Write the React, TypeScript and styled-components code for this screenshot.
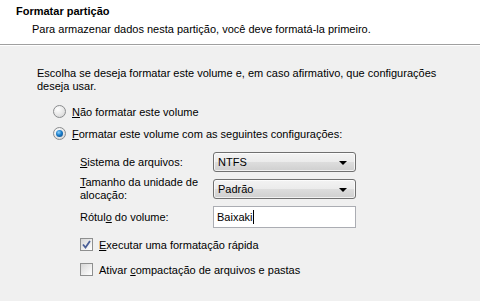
import React from 'react';
import styled, { createGlobalStyle } from 'styled-components';

const GlobalStyle = createGlobalStyle`
  html, body {
    margin: 0;
    padding: 0;
    background: #f0f0f0;
  }
  body {
    font-family: "Liberation Sans", Arial, sans-serif;
    font-size: 11px;
    color: #000;
  }
`;

const Page = styled.div`
  width: 480px;
  height: 301px;
  overflow: hidden;
  background: #f0f0f0;
`;

const Header = styled.div`
  height: 45px;
  box-sizing: border-box;
  padding: 5px 16px 0;
  background: #fff;
  border-bottom: 1px solid #a0a0a0;
  box-shadow: 0 1px 0 #fff;
`;

const Title = styled.div`
  font-weight: bold;
  line-height: 13px;
`;

const Subtitle = styled.div`
  padding-left: 16px;
  margin-top: 5px;
  line-height: 13px;
`;

const Body = styled.div`
  padding: 22px 0 0 37px;
`;

const Intro = styled.p`
  margin: 0;
  line-height: 13px;
`;

const OptionRow = styled.label<{ $top: number; $indent: number }>`
  display: flex;
  align-items: center;
  gap: 6px;
  margin-top: ${p => p.$top}px;
  margin-left: ${p => p.$indent}px;
  height: 13px;
`;

const Radio = styled.span<{ $checked?: boolean }>`
  width: 11px;
  height: 11px;
  border-radius: 50%;
  border: 1px solid #8a8c8e;
  background: radial-gradient(circle at 35% 30%, #ffffff 0%, #e4e4e4 60%, #cfcfcf 100%);
  position: relative;
  flex: none;
  &::after {
    content: '';
    display: ${p => (p.$checked ? 'block' : 'none')};
    position: absolute;
    left: 2px;
    top: 2px;
    width: 7px;
    height: 7px;
    border-radius: 50%;
    background: radial-gradient(circle at 40% 35%, #8fd3ff 0%, #1a7cc8 45%, #0a3f7a 100%);
  }
`;

const Check = styled.span`
  width: 11px;
  height: 11px;
  border: 1px solid #8e8f8f;
  background: linear-gradient(135deg, #d6d6d6 0%, #f4f4f4 70%, #ffffff 100%);
  flex: none;
  display: flex;
  align-items: center;
  justify-content: center;
`;

const Key = styled.span`
  text-decoration: underline;
`;

const Settings = styled.div`
  display: grid;
  grid-template-columns: 133px 143px;
  row-gap: 4px;
  margin: 12px 0 0 43px;
  align-items: center;
`;

const FieldLabel = styled.div`
  line-height: 13px;
`;

const Combo = styled.div`
  height: 20px;
  box-sizing: border-box;
  border: 1px solid #707070;
  border-radius: 3px;
  background: linear-gradient(#f3f3f3 0%, #ebebeb 50%, #dddddd 51%, #cfcfcf 100%);
  box-shadow: inset 0 0 0 1px rgba(255, 255, 255, 0.7);
  display: flex;
  align-items: center;
  justify-content: space-between;
  padding: 0 8px 0 4px;
`;

const Arrow = styled.span`
  width: 0;
  height: 0;
  border-left: 4px solid transparent;
  border-right: 4px solid transparent;
  border-top: 4px solid #000;
  margin-top: 1px;
`;

const TextBox = styled.div`
  height: 22px;
  box-sizing: border-box;
  border: 1px solid #abadb3;
  background: #fff;
  display: flex;
  align-items: center;
  padding: 0 3px;
`;

const Caret = styled.span`
  display: inline-block;
  width: 1px;
  height: 14px;
  background: #000;
  margin-left: 1px;
`;

const CheckMark = () => (
  <svg width="9" height="9" viewBox="0 0 9 9">
    <path d="M1 4.5 L3.5 7.5 L8 1" fill="none" stroke="#4a5f97" strokeWidth="1.8" />
  </svg>
);

export default function App() {
  return (
    <Page>
      <GlobalStyle />
      <Header>
        <Title>Formatar partição</Title>
        <Subtitle>Para armazenar dados nesta partição, você deve formatá-la primeiro.</Subtitle>
      </Header>
      <Body>
        <Intro>
          Escolha se deseja formatar este volume e, em caso afirmativo, que configurações
          <br />
          deseja usar.
        </Intro>
        <OptionRow $top={12} $indent={16}>
          <Radio />
          <span><Key>N</Key>ão formatar este volume</span>
        </OptionRow>
        <OptionRow $top={9} $indent={16}>
          <Radio $checked />
          <span><Key>F</Key>ormatar este volume com as seguintes configurações:</span>
        </OptionRow>
        <Settings>
          <FieldLabel><Key>S</Key>istema de arquivos:</FieldLabel>
          <Combo>NTFS<Arrow /></Combo>
          <FieldLabel><Key>T</Key>amanho da unidade de<br />alocação:</FieldLabel>
          <Combo>Padrão<Arrow /></Combo>
          <FieldLabel>Rótul<Key>o</Key> do volume:</FieldLabel>
          <TextBox>Baixaki<Caret /></TextBox>
        </Settings>
        <OptionRow $top={10} $indent={43}>
          <Check><CheckMark /></Check>
          <span><Key>E</Key>xecutar uma formatação rápida</span>
        </OptionRow>
        <OptionRow $top={12} $indent={43}>
          <Check />
          <span>Ativar <Key>c</Key>ompactação de arquivos e pastas</span>
        </OptionRow>
      </Body>
    </Page>
  );
}
